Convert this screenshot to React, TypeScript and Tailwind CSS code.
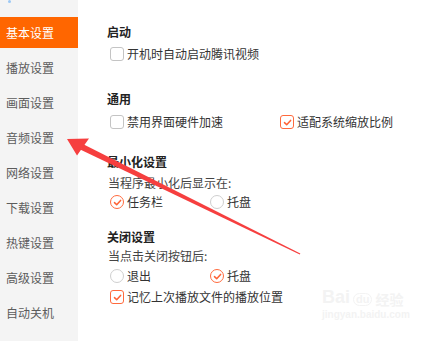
import React from 'react';

const FONT = { fontFamily: '"Microsoft YaHei", "Noto Sans CJK SC", "Noto Sans", sans-serif' };

const menu = ['基本设置', '播放设置', '画面设置', '音频设置', '网络设置', '下载设置', '热键设置', '高级设置', '自动关机'];

function Tick() {
  return (
    <svg width="9" height="9" viewBox="0 0 9 9" fill="none">
      <path d="M1.5 4.6 L3.7 6.8 L7.6 2.4" stroke="#ff6336" strokeWidth="1.5" strokeLinecap="round" strokeLinejoin="round" />
    </svg>
  );
}

function Checkbox({ checked, label }: { checked?: boolean; label: string }) {
  return (
    <div className="flex items-center">
      <span
        className={
          checked
            ? 'ml-[3px] w-[14px] h-[14px] rounded-[3px] border border-[#ff6a3d] bg-white flex items-center justify-center'
            : 'ml-[3px] w-[14px] h-[14px] rounded-[3px] border border-[#c4c4c4] bg-white'
        }
      >
        {checked && <Tick />}
      </span>
      <span className="ml-[3px] text-[12px] text-[#333]">{label}</span>
    </div>
  );
}

function Radio({ checked, label }: { checked?: boolean; label: string }) {
  return (
    <div className="flex items-center">
      <span
        className={
          checked
            ? 'ml-[3px] w-[14px] h-[14px] rounded-full border border-[#ff6a3d] bg-white flex items-center justify-center'
            : 'ml-[3px] w-[14px] h-[14px] rounded-full border border-[#cfcfcf] bg-white'
        }
      >
        {checked && <Tick />}
      </span>
      <span className="ml-[3px] text-[12px] text-[#333]">{label}</span>
    </div>
  );
}

export default function App() {
  return (
    <div className="relative w-[438px] h-[341px] bg-white overflow-hidden flex" style={FONT}>
      <aside className="w-[78px] h-full bg-[#f4f4f4] pt-[17px] flex flex-col gap-[4px] relative">
        <span className="absolute left-[8px] top-0 w-[3px] h-[3px] rounded-full bg-[#9cc8f5]" />
        {menu.map((item, i) => (
          <div
            key={item}
            className={
              i === 0
                ? 'h-[31px] flex items-center pl-[6px] bg-[#ff6600] text-white text-[12px]'
                : 'h-[31px] flex items-center pl-[6px] text-[#5c5c5c] text-[12px]'
            }
          >
            {item}
          </div>
        ))}
      </aside>

      <main className="flex-1 pl-[29px] pt-[22px] flex flex-col">
        <div className="h-[20px] flex items-center text-[12px] font-bold text-[#222]">启动</div>
        <div className="h-[22px] mt-[1px] flex items-center">
          <Checkbox label="开机时自动启动腾讯视频" />
        </div>

        <div className="h-[20px] mt-[24px] flex items-center text-[12px] font-bold text-[#222]">通用</div>
        <div className="h-[22px] mt-[2px] flex items-center">
          <div className="w-[170px]">
            <Checkbox label="禁用界面硬件加速" />
          </div>
          <Checkbox checked label="适配系统缩放比例" />
        </div>

        <div className="h-[20px] mt-[19px] flex items-center text-[12px] font-bold text-[#222]">最小化设置</div>
        <div className="h-[18px] mt-[2px] flex items-center text-[12px] text-[#444] pl-[1px]">当程序最小化后显示在:</div>
        <div className="h-[20px] flex items-center">
          <div className="w-[100px]">
            <Radio checked label="任务栏" />
          </div>
          <Radio label="托盘" />
        </div>

        <div className="h-[20px] mt-[15px] flex items-center text-[12px] font-bold text-[#222]">关闭设置</div>
        <div className="h-[18px] flex items-center text-[12px] text-[#444] pl-[1px]">当点击关闭按钮后:</div>
        <div className="h-[20px] mt-[1px] flex items-center">
          <div className="w-[100px]">
            <Radio label="退出" />
          </div>
          <Radio checked label="托盘" />
        </div>
        <div className="h-[20px] mt-[1px] flex items-center">
          <Checkbox checked label="记忆上次播放文件的播放位置" />
        </div>
      </main>

      <div className="absolute left-[322px] top-[288px] flex flex-col items-start pointer-events-none select-none">
        <div className="flex items-end text-[#f3f3f3] font-bold leading-none">
          <span className="text-[18px]" style={{ fontFamily: '"Liberation Sans", sans-serif' }}>Bai</span>
          <span className="ml-[3px] text-[11px] px-[2px] rounded-full border border-[#f3f3f3]" style={{ fontFamily: '"Liberation Sans", sans-serif' }}>du</span>
          <span className="ml-[3px] text-[14px]">经验</span>
        </div>
        <div className="mt-[4px] text-[10px] text-[#f3f3f3] font-bold leading-none" style={{ fontFamily: '"Liberation Sans", sans-serif' }}>
          jingyan.baidu.com
        </div>
      </div>

      <svg className="absolute inset-0 pointer-events-none" width="438" height="341" viewBox="0 0 438 341">
        <polygon points="80.7,149.7 83.3,144.3 300.3,253.6 299.8,254.4" fill="#f63f3f" />
        <polygon points="67,139 89,138.5 84,145.5 77,155.5" fill="#f63f3f" />
      </svg>
    </div>
  );
}
